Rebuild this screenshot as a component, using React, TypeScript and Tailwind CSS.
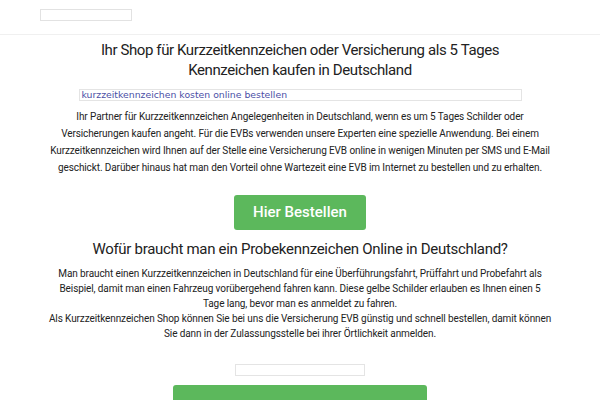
export default function App() {
  return (
    <div className="w-[600px] h-[400px] overflow-hidden bg-white text-[#222]" style={{ fontFamily: 'Roboto, "Noto Sans", sans-serif' }}>
      {/* Header */}
      <header className="h-[35px] border-b border-[#f0f0f0] pt-[9px] pl-[40px]">
        <div className="w-[92px] h-[12px] border border-[#e2e2e2]" />
      </header>

      <main className="flex flex-col items-center">
        <h1 className="mt-[5px] text-center text-[15px] leading-[20px] font-normal tracking-[-0.4px]">
          Ihr Shop für Kurzzeitkennzeichen oder Versicherung als 5 Tages
          <br />
          Kennzeichen kaufen in Deutschland
        </h1>

        <div className="mt-[9px] w-[443px] h-[12px] border border-[#e4e4e4] flex items-center pl-[2px]">
          <span className="text-[9.3px] leading-none text-[#4b4fa6]" style={{ fontFamily: '"DejaVu Sans", sans-serif' }}>
            kurzzeitkennzeichen kosten online bestellen
          </span>
        </div>

        <p className="mt-[7px] text-center text-[10px] leading-[17px] text-[#222] tracking-[-0.1px] whitespace-nowrap">
          Ihr Partner für Kurzzeitkennzeichen Angelegenheiten in Deutschland, wenn es um 5 Tages Schilder oder
          <br />
          Versicherungen kaufen angeht. Für die EVBs verwenden unsere Experten eine spezielle Anwendung. Bei einem
          <br />
          Kurzzeitkennzeichen wird Ihnen auf der Stelle eine Versicherung EVB online in wenigen Minuten per SMS und E-Mail
          <br />
          geschickt. Darüber hinaus hat man den Vorteil ohne Wartezeit eine EVB im Internet zu bestellen und zu erhalten.
        </p>

        <button className="mt-[19px] w-[132px] h-[35px] rounded-[3px] bg-[#5cb85c] text-white text-[15px] font-medium">
          Hier Bestellen
        </button>

        <h2 className="mt-[9px] text-center text-[15px] leading-[20px] font-normal tracking-[-0.3px]">
          Wofür braucht man ein Probekennzeichen Online in Deutschland?
        </h2>

        <p className="mt-[7px] text-center text-[10px] leading-[15px] text-[#222] tracking-[-0.1px] whitespace-nowrap">
          Man braucht einen Kurzzeitkennzeichen in Deutschland für eine Überführungsfahrt, Prüffahrt und Probefahrt als
          <br />
          Beispiel, damit man einen Fahrzeug vorübergehend fahren kann. Diese gelbe Schilder erlauben es Ihnen einen 5
          <br />
          Tage lang, bevor man es anmeldet zu fahren.
          <br />
          Als Kurzzeitkennzeichen Shop können Sie bei uns die Versicherung EVB günstig und schnell bestellen, damit können
          <br />
          Sie dann in der Zulassungsstelle bei ihrer Örtlichkeit anmelden.
        </p>

        <div className="mt-[23px] w-[130px] h-[12px] border border-[#e4e4e4]" />

        <button className="mt-[9px] w-[254px] h-[40px] rounded-[3px] bg-[#5cb85c] text-white text-[15px] font-medium" />
      </main>
    </div>
  )
}
